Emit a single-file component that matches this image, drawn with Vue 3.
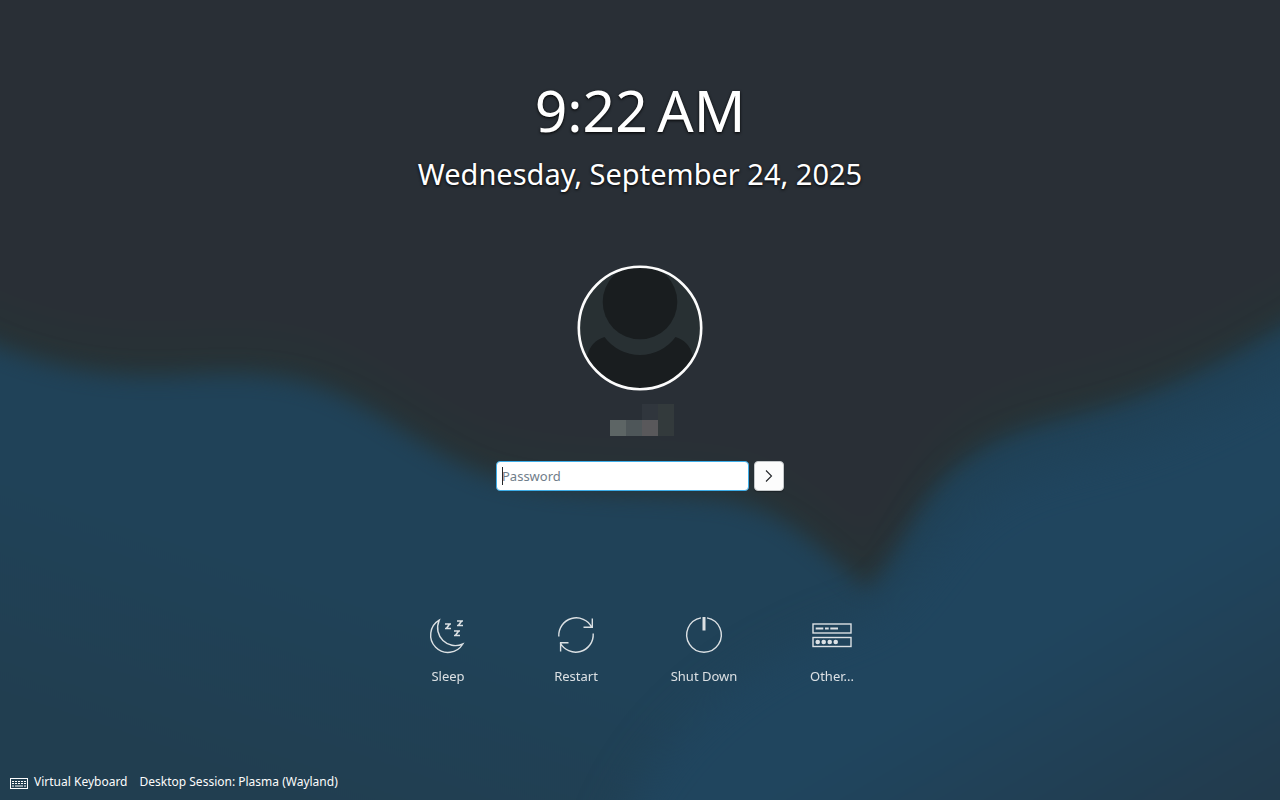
<script setup>
import { ref } from "vue";

const time = ref("9:22\u202FAM");
const date = ref("Wednesday, September 24, 2025");
const password = ref("");

const nameBlocks = [
  "clear", "clear", "slate", "moss",
  "ash", "steel", "mauve", "moss"
];

const login = () => {
  password.value = "";
};
</script>

<template>
  <main class="screen">
    <svg
      class="wallpaper"
      viewBox="0 0 1280 800"
      preserveAspectRatio="none"
      color-interpolation-filters="sRGB"
      aria-hidden="true"
    >
      <defs>
        <linearGradient id="left-hill" gradientUnits="userSpaceOnUse" x1="400" y1="450" x2="280" y2="800">
          <stop offset="0" stop-color="#204258" />
          <stop offset="0.4" stop-color="#204258" />
          <stop offset="1" stop-color="#213e50" />
        </linearGradient>
        <linearGradient id="right-hill" gradientUnits="userSpaceOnUse" x1="960" y1="460" x2="1180" y2="840">
          <stop offset="0" stop-color="#20455f" />
          <stop offset="0.45" stop-color="#20455e" />
          <stop offset="1" stop-color="#223b4d" />
        </linearGradient>
        <filter id="soft" x="-10%" y="-10%" width="120%" height="120%">
          <feGaussianBlur stdDeviation="11" />
        </filter>
        <filter id="softer" x="-20%" y="-20%" width="140%" height="140%">
          <feGaussianBlur stdDeviation="20" />
        </filter>
      </defs>
      <!-- faint green rim along the hills, blurred together with the sky -->
      <g filter="url(#softer)">
        <rect x="-200" y="-200" width="1680" height="1200" fill="#292f36" />
        <path
          fill="#273336"
          d="M-80 280 L0 315 C60 338 110 345 165 344 C225 341 265 339 310 352 C375 372 420 418 485 443 C560 467 650 458 725 468 C790 480 825 523 868 558 C900 523 920 458 966 428 C1020 386 1090 388 1170 352 C1220 332 1250 313 1280 296 L1360 250 V900 H-80 Z"
        />
      </g>
      <path
        filter="url(#soft)"
        fill="url(#left-hill)"
        d="M-80 310 L0 347 C60 370 110 377 165 376 C225 373 265 371 310 384 C375 404 420 450 485 475 C560 499 650 490 725 500 C790 512 825 555 868 590 C900 555 920 490 966 460 C1020 418 1090 420 1170 384 C1220 364 1250 345 1280 328 L1360 280 V900 H-80 Z"
      />
      <path
        filter="url(#softer)"
        fill="url(#right-hill)"
        d="M600 900 C620 750 740 660 868 620 C920 590 935 535 980 505 C1030 463 1100 465 1180 429 C1230 409 1260 390 1290 373 L1400 320 V900 H600 Z"
      />
    </svg>

    <header class="clock">
      <time class="clock-time">{{ time }}</time>
      <time class="clock-date" datetime="2025-09-24">{{ date }}</time>
    </header>

    <section class="user">
      <svg class="avatar" viewBox="0 0 126 126" aria-hidden="true">
        <defs>
          <clipPath id="face"><circle cx="63" cy="63" r="60" /></clipPath>
        </defs>
        <circle cx="63" cy="63" r="61" fill="#283033" />
        <g clip-path="url(#face)" fill="#191d1f">
          <circle cx="63" cy="37" r="37.3" />
          <path d="M27.5 72 A44 44 0 0 0 98.5 72 Q112 76 116 91 V126 H10 V91 Q14 76 27.5 72 Z" />
        </g>
        <circle cx="63" cy="63" r="61.2" fill="none" stroke="#fcfcfc" stroke-width="2.6" />
      </svg>
      <div class="name">
        <span v-for="(block, i) in nameBlocks" :key="i" :class="block"></span>
      </div>
    </section>

    <form class="login" @submit.prevent="login">
      <div class="field">
        <input v-model="password" type="password" placeholder="Password" aria-label="Password" />
        <span v-if="!password" class="caret"></span>
      </div>
      <button class="submit" type="submit" aria-label="Log in">
        <svg width="16" height="16" viewBox="0 0 16 16">
          <path d="M5 2.5 L10.5 8 L5 13.5" fill="none" stroke="#232629" stroke-width="1.1" />
        </svg>
      </button>
    </form>

    <nav class="actions">
      <button type="button" class="action">
        <svg class="icon" viewBox="0 0 48 48">
          <path d="M15.2 9.2 A17.3 17.3 0 1 0 38.8 33 C24 39.5 8.5 25 15.2 9.2 Z" />
          <path
            class="snore"
            d="M21 13 H27 M25.6 13 L22.4 17.5 M21 17.5 H27 M33 10 H39 M37.6 10 L34.4 14.5 M33 14.5 H39 M30 20 H36 M34.6 20 L31.4 24.5 M30 24.5 H36"
          />
        </svg>
        <span>Sleep</span>
      </button>
      <button type="button" class="action">
        <svg class="icon" viewBox="0 0 48 48">
          <path d="M6.8 25.5 A17.5 17.5 0 0 1 39.8 16.3 M40.3 7.5 V16.3 H31.5" />
          <path d="M41.2 22.5 A17.5 17.5 0 0 1 8.2 31.7 M8.6 40.5 V31.7 H16.5" />
        </svg>
        <span>Restart</span>
      </button>
      <button type="button" class="action">
        <svg class="icon" viewBox="0 0 48 48">
          <path d="M21 6.9 A17.3 17.3 0 1 0 27 6.9" />
          <path class="bar" d="M24 6 V19.5" />
        </svg>
        <span>Shut Down</span>
      </button>
      <button type="button" class="action">
        <svg class="icon" viewBox="0 0 48 48">
          <rect x="5" y="13" width="38" height="9" />
          <rect x="5" y="26.5" width="38" height="9" />
          <path class="dash" d="M7.7 17.5 H15.3 M17 17.5 H20.7 M22.3 17.5 H30" />
          <g class="dots">
            <circle cx="9.7" cy="31" r="2.3" />
            <circle cx="15.7" cy="31" r="2.3" />
            <circle cx="21.7" cy="31" r="2.3" />
            <circle cx="27.7" cy="31" r="2.3" />
          </g>
        </svg>
        <span>Other...</span>
      </button>
    </nav>

    <footer class="footer">
      <button type="button" class="tool">
        <svg class="keyboard" width="18" height="12" viewBox="0 0 18 12">
          <rect x="0.5" y="0.5" width="17" height="10" fill="none" stroke="#fcfcfc" />
          <path d="M2 3.5 H16 M2 5.5 H16" stroke="#fcfcfc" stroke-dasharray="2 1" />
          <path d="M2 8 H4 M5 8 H13 M14 8 H16" stroke="#fcfcfc" stroke-width="1.2" />
        </svg>
        Virtual Keyboard
      </button>
      <button type="button" class="tool">Desktop Session: Plasma (Wayland)</button>
    </footer>
  </main>
</template>

<style>
body {
  margin: 0;
  background: #292f36;
}
</style>

<style scoped>
.screen {
  position: relative;
  display: flex;
  flex-direction: column;
  align-items: center;
  box-sizing: border-box;
  min-height: 100vh;
  padding-top: 70px;
  overflow: hidden;
  color: #fcfcfc;
  font-family: "Noto Sans", sans-serif;
  background: #292f36;
  isolation: isolate;
}

.wallpaper {
  position: absolute;
  inset: 0;
  z-index: -1;
  width: 100%;
  height: 100%;
}

.clock {
  display: flex;
  flex-direction: column;
  align-items: center;
  gap: 4px;
  color: #fff;
  text-shadow: 0 1px 3px #000;
}

.clock-time {
  font-size: 57px;
  line-height: 80px;
}

.clock-date {
  font-size: 29px;
  line-height: 40px;
}

.user {
  display: flex;
  flex-direction: column;
  align-items: center;
  gap: 13px;
  margin-top: 71px;
}

.avatar {
  width: 126px;
  height: 126px;
}

/* pixelated user name */
.name {
  display: grid;
  grid-template-columns: repeat(4, 16px);
  grid-auto-rows: 16px;
  padding-left: 4px;
}

.slate { background: #30363d; }
.moss { background: #333a3c; }
.ash { background: #5d6565; }
.steel { background: #4e5659; }
.mauve { background: #59585b; }

.login {
  display: flex;
  gap: 5px;
  margin-top: 25px;
}

.field {
  position: relative;
}

.field input {
  box-sizing: border-box;
  width: 253px;
  height: 30px;
  padding: 0 5px;
  border: 1px solid #3daee9;
  border-radius: 4px;
  outline: none;
  background: #fff;
  color: #232629;
  font-family: inherit;
  font-size: 13px;
}

.field input::placeholder {
  color: #707d8a;
}

.caret {
  position: absolute;
  top: 6px;
  left: 6px;
  width: 1px;
  height: 18px;
  background: #232629;
}

.submit {
  display: grid;
  place-items: center;
  width: 30px;
  height: 30px;
  padding: 0;
  border: 1px solid #c4c8ca;
  border-radius: 4px;
  background: #fcfcfc;
  box-shadow: 0 1px 1px rgba(0, 0, 0, 0.3);
  cursor: pointer;
}

.actions {
  display: flex;
  margin-top: 120px;
}

.action {
  display: flex;
  flex-direction: column;
  align-items: center;
  gap: 8px;
  width: 128px;
  padding: 0;
  border: none;
  background: none;
  color: #fcfcfc;
  font-family: inherit;
  font-size: 13px;
  line-height: 18px;
  opacity: 0.85;
  cursor: pointer;
}

.action:hover {
  opacity: 1;
}

.icon {
  width: 48px;
  height: 48px;
  fill: none;
  stroke: #fcfcfc;
  stroke-width: 1.4;
}

.icon .snore {
  stroke-width: 1.6;
}

.icon .bar {
  stroke-width: 3;
}

.icon .dash {
  stroke-width: 2;
}

.icon .dots {
  fill: #fcfcfc;
  stroke: none;
}

.footer {
  display: flex;
  align-self: stretch;
  align-items: flex-end;
  gap: 12px;
  margin-top: auto;
  padding: 0 10px 10px;
}

.tool {
  display: flex;
  align-items: center;
  gap: 6px;
  padding: 0;
  border: none;
  background: none;
  color: #fcfcfc;
  font-family: inherit;
  font-size: 12px;
  line-height: 16px;
  cursor: pointer;
}

.keyboard {
  align-self: flex-end;
}
</style>
